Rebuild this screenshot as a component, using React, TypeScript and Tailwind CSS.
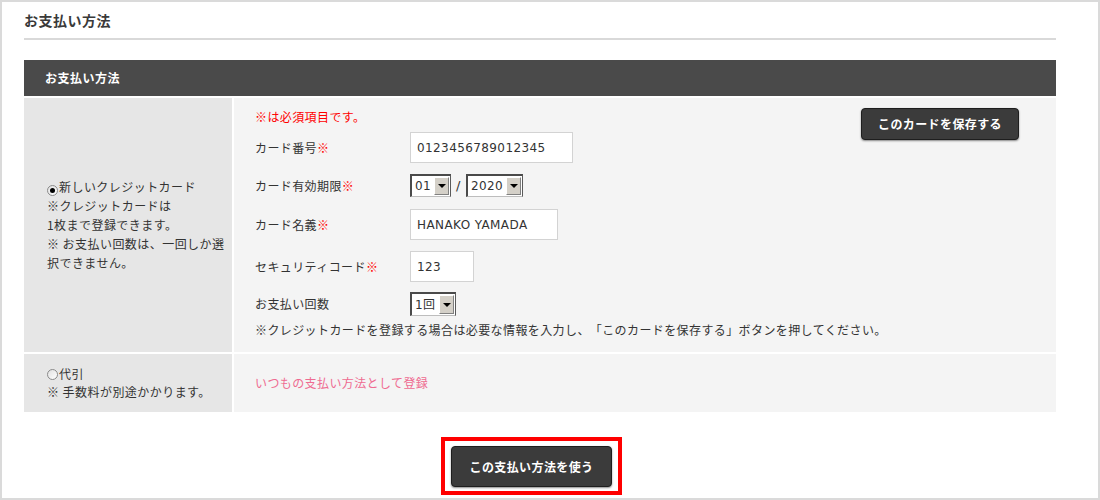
import React from 'react';

const jp = "font-['Noto_Sans_CJK_JP',sans-serif]";
const latin = "font-['DejaVu_Sans','Noto_Sans_CJK_JP',sans-serif]";

function Req() {
  return <span className="text-[#ff0000]">※</span>;
}

function Radio({ checked }: { checked?: boolean }) {
  return (
    <span className="inline-flex w-[11px] h-[11px] mr-[1px] rounded-full border border-[#8a8a8a] bg-gradient-to-br from-[#e0e0e0] to-white items-center justify-center align-[-1px]">
      {checked && <span className="w-[5px] h-[5px] rounded-full bg-black" />}
    </span>
  );
}

function TextBox({ value, width }: { value: string; width: string }) {
  return (
    <div
      className={`${width} h-[31px] bg-white border border-[#d3d3d3] flex items-center pl-[6px] text-[12px] text-[#333] ${latin}`}
    >
      {value}
    </div>
  );
}

function Select({ value, width, height }: { value: string; width: string; height: string }) {
  return (
    <div
      className={`${width} ${height} flex bg-white border-t-2 border-l-2 border-r border-b border-t-[#4a4a4a] border-l-[#4a4a4a] border-r-[#5a5a5a] border-b-[#bdbdbd] p-[1px]`}
    >
      <div className={`flex-1 flex items-center pl-[2px] text-[12px] text-[#333] ${latin}`}>{value}</div>
      <div className="w-[15px] bg-[#d4d0c8] border border-t-white border-l-white border-r-[#808080] border-b-[#808080] flex items-center justify-center">
        <span className="w-0 h-0 border-l-[4px] border-r-[4px] border-t-[4px] border-l-transparent border-r-transparent border-t-black" />
      </div>
    </div>
  );
}

function FieldRow({ label, children, mt, h }: { label: React.ReactNode; children: React.ReactNode; mt: string; h: string }) {
  return (
    <div className={`flex items-center ${mt} ${h}`}>
      <div className="w-[155px] shrink-0">{label}</div>
      {children}
    </div>
  );
}

function DarkButton({ label, className }: { label: string; className: string }) {
  return (
    <button
      className={`${className} bg-[#3b3b3b] border border-[#1e1e1e] rounded-[4px] shadow-[0_1px_2px_rgba(0,0,0,0.45)] text-white text-[12px] font-bold tracking-[0.4px] flex items-center justify-center`}
    >
      {label}
    </button>
  );
}

export default function App() {
  return (
    <div className={`w-[1100px] h-[500px] bg-white border-2 border-[#dadada] ${jp} text-[#333] [text-spacing-trim:space-all]`}>
      <div className="ml-[22px] w-[1032px]">
        <div className="h-[38px] flex items-center border-b-2 border-[#d9d9d9] text-[14px] font-bold tracking-[0.5px] text-[#3a3a3a]">
          お支払い方法
        </div>

        <div className="mt-[20px] h-[36px] bg-[#4a4a4a] flex items-center pl-[21px] text-white text-[12px] font-bold tracking-[0.5px]">
          お支払い方法
        </div>

        {/* credit card row */}
        <div className="mt-[2px] flex gap-[2px] h-[254px]">
          <div className="w-[208px] shrink-0 bg-[#e6e6e6] flex items-center pl-[23px] text-[12px] leading-[19px] tracking-[0.45px] whitespace-nowrap">
            <div className="mt-[-1px]">
              <div>
                <Radio checked />
                新しいクレジットカード
              </div>
              <div>※クレジットカードは</div>
              <div>1枚まで登録できます。</div>
              <div>※ お支払い回数は、一回しか選</div>
              <div>択できません。</div>
            </div>
          </div>

          <div className="flex-1 bg-[#f4f4f4] pl-[21px] text-[12px] tracking-[0.4px] whitespace-nowrap">
            <div className="flex justify-between">
              <div className="pt-[9px]">
                <div className="h-[20px] leading-[20px] text-[#ff0000]">※は必須項目です。</div>

                <FieldRow label={<>カード番号<Req /></>} mt="mt-[5px]" h="h-[31px]">
                  <TextBox value="0123456789012345" width="w-[163px]" />
                </FieldRow>

                <FieldRow label={<>カード有効期限<Req /></>} mt="mt-[11px]" h="h-[23px]">
                  <Select value="01" width="w-[41px]" height="h-[23px]" />
                  <span className={`w-[15px] text-center text-[13px] ${latin}`}>/</span>
                  <Select value="2020" width="w-[57px]" height="h-[23px]" />
                </FieldRow>

                <FieldRow label={<>カード名義<Req /></>} mt="mt-[12px]" h="h-[31px]">
                  <TextBox value="HANAKO YAMADA" width="w-[148px]" />
                </FieldRow>

                <FieldRow label={<>セキュリティコード<Req /></>} mt="mt-[11px]" h="h-[31px]">
                  <TextBox value="123" width="w-[64px]" />
                </FieldRow>

                <FieldRow label="お支払い回数" mt="mt-[10px]" h="h-[24px]">
                  <Select value="1回" width="w-[46px]" height="h-[24px]" />
                </FieldRow>
              </div>

              <DarkButton label="このカードを保存する" className="mt-[10px] mr-[37px] w-[158px] h-[32px]" />
            </div>

            <div className="mt-[5px] h-[18px] leading-[18px]">
              ※クレジットカードを登録する場合は必要な情報を入力し、「このカードを保存する」ボタンを押してください。
            </div>
          </div>
        </div>

        {/* cash on delivery row */}
        <div className="mt-[2px] flex gap-[2px] h-[58px]">
          <div className="w-[208px] shrink-0 bg-[#e6e6e6] flex items-center pl-[23px] text-[12px] leading-[18px] tracking-[0.45px] whitespace-nowrap">
            <div>
              <div>
                <Radio />
                代引
              </div>
              <div>※ 手数料が別途かかります。</div>
            </div>
          </div>
          <div className="flex-1 bg-[#f4f4f4] pl-[21px] flex items-center text-[12px] tracking-[0.4px] text-[#ef6b91]">
            いつもの支払い方法として登録
          </div>
        </div>

        <div className="mt-[25px] ml-[417px] w-[181px] h-[58px] border-4 border-[#ff0000] pt-[5px] pl-[6px]">
          <DarkButton label="この支払い方法を使う" className="w-[161px] h-[41px]" />
        </div>
      </div>
    </div>
  );
}
